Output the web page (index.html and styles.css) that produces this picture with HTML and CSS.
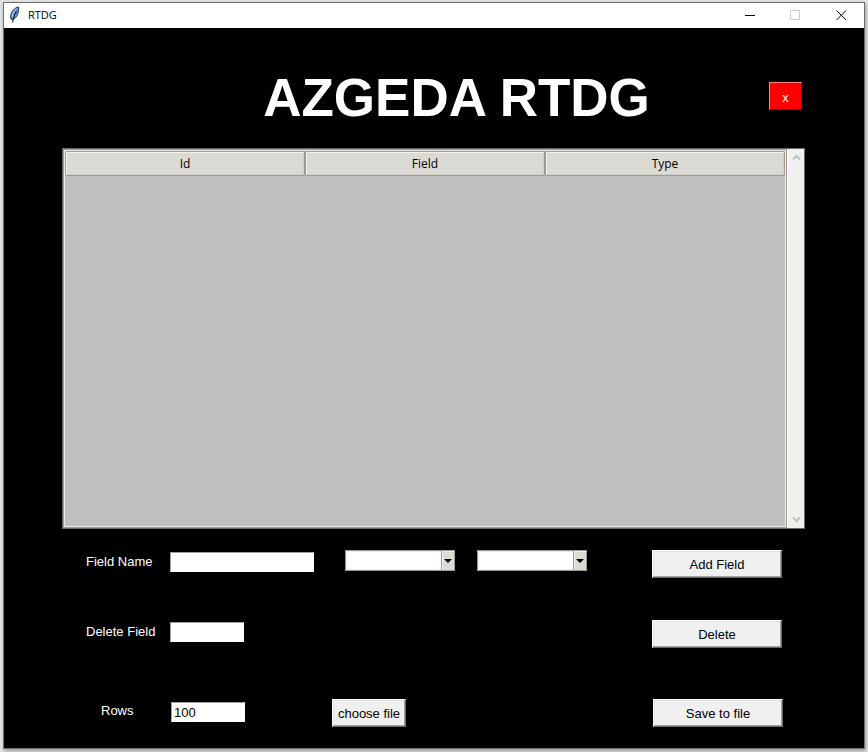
FILE: index.html
```html
<!DOCTYPE html>
<html lang="en">
<head>
<meta charset="utf-8">
<title>RTDG</title>
<link rel="stylesheet" href="styles.css">
</head>
<body>
<div class="window">
  <header class="titlebar">
    <svg class="feather" viewBox="0 0 12 18" width="12" height="18" aria-hidden="true">
      <path d="M9.500 1C6 1.500 2 5 1.500 11L2.500 13.500L4.500 13.500C8 11 10.500 6 9.500 1Z" fill="#5f93d6" stroke="#2a3446" stroke-width="1"/>
      <path d="M7.500 2.500C5 4.500 3.500 7.500 3 11" fill="none" stroke="#b9d6f5" stroke-width="1"/>
      <path d="M7.500 5C6 8 4.500 11 3.500 16.500" fill="none" stroke="#101010" stroke-width="1"/>
    </svg>
    <span class="caption">RTDG</span>
    <button class="winbtn" type="button" aria-label="Minimize"><svg width="11" height="11" viewBox="0 0 11 11"><path d="M1 5.500H11" stroke="#000"/></svg></button>
    <button class="winbtn" type="button" aria-label="Maximize" disabled><svg width="11" height="11" viewBox="0 0 11 11"><path d="M.5.5H9.500V9.500H.5Z" fill="none" stroke="#ccc"/></svg></button>
    <button class="winbtn" type="button" aria-label="Close"><svg width="11" height="11" viewBox="0 0 11 11"><path d="M.5.5L10 10M10 .5L.5 10" stroke="#000"/></svg></button>
  </header>
  <main class="content">
    <div class="banner">
      <h1>AZGEDA RTDG</h1>
      <button class="exit" type="button">x</button>
    </div>
    <div class="panel">
      <div class="tree">
        <table class="fields">
          <thead><tr><th scope="col">Id</th><th scope="col">Field</th><th scope="col">Type</th></tr></thead>
        </table>
      </div>
      <div class="scrollbar">
        <button type="button" aria-label="Scroll up"><svg width="9" height="7" viewBox="0 0 9 7"><path d="M1 5.500L4.500 2L8 5.500" fill="none" stroke="#bfbfbf" stroke-width="2"/></svg></button>
        <button type="button" aria-label="Scroll down"><svg width="9" height="7" viewBox="0 0 9 7"><path d="M1 1.500L4.500 5L8 1.500" fill="none" stroke="#bfbfbf" stroke-width="2"/></svg></button>
      </div>
    </div>
    <form class="form">
      <div class="row">
        <label for="field-name">Field Name</label>
        <input class="entry wide" id="field-name" type="text">
        <div class="combo"><select aria-label="Category"><option></option></select><span class="arrow"></span></div>
        <div class="combo"><select aria-label="Type"><option></option></select><span class="arrow"></span></div>
        <button class="btn" type="button">Add Field</button>
      </div>
      <div class="row delete-row">
        <label for="delete-field">Delete Field</label>
        <input class="entry" id="delete-field" type="text">
        <button class="btn" type="button">Delete</button>
      </div>
      <div class="row output-row">
        <label for="rows">Rows</label>
        <input class="entry" id="rows" type="text" value="100">
        <button class="btn choose" type="button">choose file</button>
        <button class="btn" type="button">Save to file</button>
      </div>
    </form>
  </main>
</div>
</body>
</html>
```
FILE: styles.css
```css
* {
  box-sizing: border-box;
}

body {
  margin: 0;
  min-height: 100vh;
  padding: 2px 3px 3px;
  display: flex;
  background: #e4e4e4;
  font-family: "Liberation Sans", Arial, sans-serif;
  font-size: 13px;
}

button,
input,
select {
  margin: 0;
  border-radius: 0;
  font: inherit;
}

.window {
  flex: 1;
  display: flex;
  flex-direction: column;
  border: 1px solid #6e6e6e;
  box-shadow: 1px 2px 4px #999;
  background: #000;
}

.titlebar {
  display: flex;
  height: 25px;
  background: #fff;
}

.feather {
  margin: 3px 6px 0 5px;
}

.caption {
  flex: 1;
  padding-left: 1px;
  font: 11px/24px "Open Sans", sans-serif;
  color: #000;
}

.winbtn {
  width: 46px;
  padding: 0;
  border: 0;
  background: none;
  display: flex;
  align-items: center;
  justify-content: center;
}

.content {
  flex: 1;
  display: flex;
  flex-direction: column;
}

.banner {
  height: 120px;
  display: grid;
  grid-template-columns: 1fr 33px;
  padding: 39px 62px 0 140px;
}

h1 {
  margin: 0;
  text-align: center;
  font-size: 53px;
  line-height: 62px;
  color: #fff;
}

.exit {
  height: 28px;
  margin-top: 15px;
  padding: 2px 0 0;
  border: 1px solid;
  border-color: #ff8080 #b00000 #b00000 #ff8080;
  background: #f00;
  color: #fff;
}

.panel {
  flex: 1;
  display: flex;
  margin: 0 59px 0 58px;
  border: 1px solid #696969;
}

.tree {
  flex: 1;
  border: 1px solid #9e9a91;
  box-shadow: inset 0 0 0 1px #eeebe7;
  padding: 1px;
  background: #c0c0c0;
}

.fields {
  width: 100%;
  table-layout: fixed;
  border-collapse: separate;
  border-spacing: 0;
}

.fields th {
  height: 25px;
  padding: 0;
  border: 1px solid #9e9a91;
  border-radius: 1px;
  box-shadow: inset 1px 1px #f3f2ee, inset -1px -1px #cfcdc5;
  background: #dcdad5;
  font: 12px/20px "Open Sans", sans-serif;
  color: #000;
}

.scrollbar {
  width: 17px;
  display: flex;
  flex-direction: column;
  justify-content: space-between;
  border-left: 1px solid #fff;
  background: #f0f0f0;
}

.scrollbar button {
  height: 17px;
  padding: 0;
  border: 0;
  background: none;
  display: flex;
  align-items: center;
  justify-content: center;
}

.form {
  display: flex;
  flex-direction: column;
  gap: 42px;
  padding: 21px 81px 21px 80px;
}

.row {
  display: grid;
  grid-template-columns: 86px 175fr 132fr 175fr 131px;
  align-items: start;
  height: 28px;
}

.delete-row {
  grid-template-columns: 86px 1fr 131px;
}

.output-row {
  grid-template-columns: 87px 161fr 321fr 130px;
  margin-top: 9px;
}

label {
  padding-left: 2px;
  line-height: 24px;
  color: #fff;
}

.output-row label {
  padding-left: 17px;
}

.entry {
  width: 74px;
  height: 20px;
  margin-top: 2px;
  padding: 1px 2px 0;
  border: 1px solid;
  border-color: #a0a0a0 #fff #fff #a0a0a0;
  background: #fff;
  color: #000;
}

.entry.wide {
  width: 144px;
}

.output-row .entry {
  margin-top: 3px;
}

.combo {
  display: flex;
  width: 110px;
  height: 21px;
  position: relative;
}

.combo select {
  width: 100%;
  appearance: none;
  padding: 0 16px 0 2px;
  border: 1px solid #9e9a91;
  box-shadow: inset 0 0 0 1px #eeebe7;
  background: #fff;
}

.arrow {
  position: absolute;
  top: 0;
  right: 0;
  bottom: 0;
  width: 14px;
  border: 1px solid #9e9a91;
  box-shadow: inset 1px 1px #f3f2ee;
  background: #dcdad5;
  display: flex;
  align-items: center;
  justify-content: center;
  pointer-events: none;
}

.arrow::before {
  content: "";
  border: 4px solid transparent;
  border-top-color: #000;
  border-bottom: 0;
}

.btn {
  width: 130px;
  height: 28px;
  padding: 0;
  border: 1px solid;
  border-color: #fff #696969 #696969 #fff;
  box-shadow: inset -1px -1px #a0a0a0, inset 1px 1px #e3e3e3;
  background: #f0f0f0;
  color: #000;
}

.btn.choose {
  width: 74px;
}
```
